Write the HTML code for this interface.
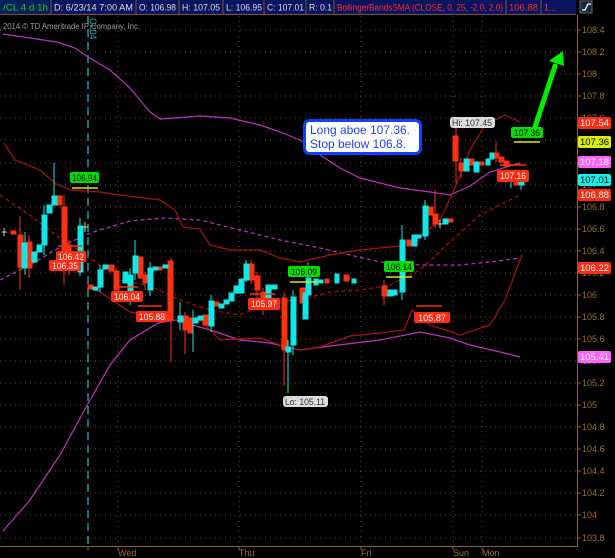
<!DOCTYPE html>
<html><head><meta charset="utf-8"><style>
html,body{margin:0;padding:0;background:#000;width:615px;height:558px;overflow:hidden;font-family:"Liberation Sans",sans-serif}
</style></head><body>
<svg width="615" height="558" viewBox="0 0 615 558" xmlns="http://www.w3.org/2000/svg" font-family="Liberation Sans, sans-serif">
<rect width="615" height="558" fill="#000"/>
<!-- top bar -->
<rect x="0" y="0" width="576" height="14" fill="#0b1460"/>
<rect x="0" y="0" width="50" height="14" fill="#06205a"/>
<g stroke="#7a5a20" stroke-width="1">
<line x1="51" y1="0" x2="51" y2="14"/><line x1="136" y1="0" x2="136" y2="14"/><line x1="179" y1="0" x2="179" y2="14"/><line x1="223" y1="0" x2="223" y2="14"/><line x1="264" y1="0" x2="264" y2="14"/><line x1="306" y1="0" x2="306" y2="14"/><line x1="334" y1="0" x2="334" y2="14"/><line x1="506" y1="0" x2="506" y2="14"/><line x1="541" y1="0" x2="541" y2="14"/>
<line x1="0" y1="14.5" x2="576" y2="14.5"/>
</g>
<g font-size="9.5" fill="#dcdcdc" lengthAdjust="spacingAndGlyphs">
<text x="3" y="10.5" fill="#22cc22" textLength="45" lengthAdjust="spacingAndGlyphs">/CL 4 d 1h</text>
<text x="54" y="10.5" textLength="79" lengthAdjust="spacingAndGlyphs">D: 6/23/14 7:00 AM</text>
<text x="139" y="10.5" textLength="37" lengthAdjust="spacingAndGlyphs">O: 106.98</text>
<text x="182" y="10.5" textLength="38" lengthAdjust="spacingAndGlyphs">H: 107.05</text>
<text x="226" y="10.5" textLength="36" lengthAdjust="spacingAndGlyphs">L: 106.95</text>
<text x="267" y="10.5" textLength="37" lengthAdjust="spacingAndGlyphs">C: 107.01</text>
<text x="309" y="10.5" textLength="23" lengthAdjust="spacingAndGlyphs">R: 0.1</text>
<text x="337" y="10.5" fill="#ff2a2a" textLength="166" lengthAdjust="spacingAndGlyphs">BollingerBandsSMA (CLOSE, 0, 25, -2.0, 2.0)</text>
<text x="509" y="10.5" fill="#ff2a2a" textLength="29" lengthAdjust="spacingAndGlyphs">106.88</text>
<text x="544" y="10.5" fill="#ff2a2a" textLength="12" lengthAdjust="spacingAndGlyphs">1...</text>
</g>
<rect x="580" y="1" width="12" height="12" fill="#1a2a3a" stroke="#667" stroke-width="1"/>
<path d="M582 10 h3 l3 -6 h3" stroke="#fff" fill="none" stroke-width="1.3"/>
<text x="3" y="29" font-size="8.5" fill="#9a9a9a" textLength="137" lengthAdjust="spacingAndGlyphs">2014 © TD Ameritrade IP Company, Inc.</text>
<!-- grid -->
<g stroke="#6a4a18" stroke-width="1" stroke-dasharray="1,4">
<line x1="0" y1="30" x2="576" y2="30"/><line x1="0" y1="52" x2="576" y2="52"/><line x1="0" y1="74" x2="576" y2="74"/><line x1="0" y1="96" x2="576" y2="96"/><line x1="0" y1="118" x2="576" y2="118"/><line x1="0" y1="140" x2="576" y2="140"/><line x1="0" y1="163" x2="576" y2="163"/><line x1="0" y1="185" x2="576" y2="185"/><line x1="0" y1="207" x2="576" y2="207"/><line x1="0" y1="229" x2="576" y2="229"/><line x1="0" y1="251" x2="576" y2="251"/><line x1="0" y1="273" x2="576" y2="273"/><line x1="0" y1="295" x2="576" y2="295"/><line x1="0" y1="317" x2="576" y2="317"/><line x1="0" y1="339" x2="576" y2="339"/><line x1="0" y1="361" x2="576" y2="361"/><line x1="0" y1="383" x2="576" y2="383"/><line x1="0" y1="405" x2="576" y2="405"/><line x1="0" y1="427" x2="576" y2="427"/><line x1="0" y1="449" x2="576" y2="449"/><line x1="0" y1="471" x2="576" y2="471"/><line x1="0" y1="493" x2="576" y2="493"/><line x1="0" y1="515" x2="576" y2="515"/><line x1="0" y1="538" x2="576" y2="538"/>
<line x1="118" y1="16" x2="118" y2="545"/><line x1="239" y1="16" x2="239" y2="545"/><line x1="361" y1="16" x2="361" y2="545"/><line x1="453" y1="16" x2="453" y2="545"/><line x1="482" y1="16" x2="482" y2="545"/>
</g>
<!-- axes -->
<g stroke="#8a6420" stroke-width="1">
<line x1="577.5" y1="15" x2="577.5" y2="546"/><line x1="0" y1="546.5" x2="578" y2="546.5"/>
<line x1="118" y1="546" x2="118" y2="550"/><line x1="239" y1="546" x2="239" y2="550"/><line x1="361" y1="546" x2="361" y2="550"/><line x1="453" y1="546" x2="453" y2="550"/><line x1="482" y1="546" x2="482" y2="550"/><line x1="88" y1="546" x2="88" y2="550"/>
<line x1="577" y1="30" x2="581" y2="30"/><line x1="577" y1="52" x2="581" y2="52"/><line x1="577" y1="74" x2="581" y2="74"/><line x1="577" y1="96" x2="581" y2="96"/><line x1="577" y1="207" x2="581" y2="207"/><line x1="577" y1="229" x2="581" y2="229"/><line x1="577" y1="251" x2="581" y2="251"/><line x1="577" y1="295" x2="581" y2="295"/><line x1="577" y1="317" x2="581" y2="317"/><line x1="577" y1="339" x2="581" y2="339"/><line x1="577" y1="383" x2="581" y2="383"/><line x1="577" y1="405" x2="581" y2="405"/><line x1="577" y1="427" x2="581" y2="427"/><line x1="577" y1="449" x2="581" y2="449"/><line x1="577" y1="471" x2="581" y2="471"/><line x1="577" y1="493" x2="581" y2="493"/><line x1="577" y1="515" x2="581" y2="515"/><line x1="577" y1="538" x2="581" y2="538"/>
</g>
<g font-size="9" fill="#9a7030">
<text x="582" y="33">108.4</text><text x="582" y="55">108.2</text><text x="582" y="77">108</text><text x="582" y="99">107.8</text><text x="582" y="121">107.6</text><text x="582" y="143">107.4</text><text x="582" y="166">107.2</text><text x="582" y="188">107</text><text x="582" y="210">106.8</text><text x="582" y="232">106.6</text><text x="582" y="254">106.4</text><text x="582" y="276">106.2</text><text x="582" y="298">106</text><text x="582" y="320">105.8</text><text x="582" y="342">105.6</text><text x="582" y="364">105.4</text><text x="582" y="386">105.2</text><text x="582" y="408">105</text><text x="582" y="430">104.8</text><text x="582" y="452">104.6</text><text x="582" y="474">104.4</text><text x="582" y="496">104.2</text><text x="582" y="518">104</text><text x="582" y="541">103.8</text>
<text x="118" y="556">Wed</text><text x="239" y="556">Thu</text><text x="361" y="556">Fri</text><text x="453" y="556">Sun</text><text x="482" y="556">Mon</text>
</g>
<!-- teal dashed -->
<line x1="88" y1="16" x2="88" y2="546" stroke="#1aa0a0" stroke-width="1.5" stroke-dasharray="8,5"/>
<text x="0" y="0" font-size="9" fill="#1ab0b0" transform="translate(90,18) rotate(90)">CL04</text>
<!-- indicator lines -->
<g fill="none" stroke-width="1.2">
<path stroke="#c030c0" d="M3 34 L30 38 L57 42 L75 48 L88 57 L110 70 L130 88 L150 112 L160 119 L175 118 L200 116 L230 118 L260 125 L280 132 L300 140 L320 155 L340 168 L360 178 L400 188 L430 192 L450 195 L470 186 L490 172 L520 163"/>
<path stroke="#c030c0" d="M3 531 L30 500 L60 455 L90 400 L110 365 L130 340 L158 323 L175 320 L210 330 L240 340 L270 343 L300 350 L330 346 L380 340 L420 332 L450 338 L470 345 L500 352 L520 357"/>
<path stroke="#c030c0" stroke-dasharray="4,3" d="M0 280 L30 265 L60 247 L90 233 L130 221 L165 218 L200 220 L240 230 L280 240 L320 248 L350 255 L380 262 L420 265 L460 265 L490 262 L520 258"/>
<path stroke="#b01010" d="M4 143 L15 160 L40 170 L55 183 L70 190 L100 192 L120 195 L160 200 L175 210 L183 227 L200 229 L210 245 L230 250 L260 250 L280 258 L300 262 L330 255 L360 250 L380 248 L400 246 L420 236 L440 220 L455 188 L470 150 L485 125 L505 115 L520 122"/>
<path stroke="#b01010" d="M90 288 L100 292 L130 312 L160 318 L180 321 L200 320 L220 340 L260 338 L280 345 L300 350 L320 347 L350 336 L380 333 L404 330 L412 310 L430 325 L460 335 L490 325 L505 300 L522 255"/>
<path stroke="#b01010" stroke-dasharray="4,3" d="M0 195 L30 215 L60 238 L90 258 L120 280 L150 286 L180 300 L210 310 L240 315 L270 302 L300 300 L330 292 L360 290 L390 285 L420 270 L450 242 L480 215 L520 195"/>
</g>
<!-- candles -->
<g stroke-width="1">
<g stroke="#ff3010" fill="#ff3010">
<line x1="20" y1="216" x2="20" y2="290"/><rect x="18" y="235" width="5" height="32"/>
<rect x="11" y="231" width="5" height="3"/>
<line x1="29" y1="235" x2="29" y2="278"/><rect x="27" y="242" width="5" height="26"/>
<rect x="57" y="196" width="5" height="9"/>
<line x1="64" y1="195" x2="64" y2="285"/><rect x="62" y="207" width="5" height="55"/>
<line x1="69" y1="240" x2="69" y2="275"/><rect x="67" y="245" width="4" height="10"/>
<rect x="88" y="285" width="5" height="4"/>
<rect x="109" y="265" width="5" height="6"/>
<line x1="116" y1="268" x2="116" y2="298"/><rect x="114" y="271" width="5" height="19"/>
<rect x="138" y="257" width="5" height="21"/>
<line x1="145" y1="272" x2="145" y2="290"/><rect x="143" y="275" width="5" height="8"/>
<rect x="158" y="267" width="4" height="3"/>
<line x1="171" y1="258" x2="171" y2="362"/><rect x="168" y="261" width="5" height="59"/>
<line x1="185" y1="312" x2="185" y2="354"/><rect x="183" y="316" width="5" height="14"/>
<rect x="188" y="318" width="5" height="15"/>
<rect x="203" y="315" width="5" height="10"/>
<rect x="214" y="302" width="5" height="4"/>
<line x1="251" y1="260" x2="251" y2="284"/><rect x="249" y="264" width="5" height="16"/>
<line x1="257" y1="272" x2="257" y2="300"/><rect x="255" y="276" width="5" height="14"/>
<line x1="263" y1="288" x2="263" y2="315"/><rect x="261" y="292" width="5" height="6"/>
<line x1="284" y1="292" x2="284" y2="386"/><rect x="282" y="298" width="5" height="52"/>
<rect x="300" y="288" width="5" height="15"/>
<rect x="325" y="279" width="4" height="4"/>
<rect x="344" y="275" width="5" height="6"/>
<line x1="384" y1="280" x2="384" y2="305"/><rect x="382" y="286" width="5" height="10"/>
<rect x="407" y="240" width="5" height="6"/>
<rect x="428" y="207" width="5" height="8"/>
<line x1="435" y1="190" x2="435" y2="228"/><rect x="433" y="214" width="5" height="10"/>
<rect x="448" y="219" width="5" height="3"/>
<line x1="456" y1="128" x2="456" y2="183"/><rect x="453" y="136" width="5" height="25"/>
<line x1="461" y1="158" x2="461" y2="178"/><rect x="459" y="163" width="5" height="8"/>
<rect x="469" y="159" width="5" height="6"/>
<rect x="479" y="162" width="5" height="3"/>
<line x1="496" y1="142" x2="496" y2="162"/><rect x="494" y="153" width="5" height="5"/>
<rect x="499" y="157" width="5" height="5"/>
<rect x="504" y="161" width="5" height="5"/>
<rect x="514" y="178" width="5" height="7"/>
</g>
<g stroke="#10e8e8" fill="#10e8e8">
<line x1="25" y1="232" x2="25" y2="275"/><rect x="22" y="243" width="5" height="25"/>
<rect x="32" y="252" width="5" height="10"/>
<rect x="37" y="245" width="5" height="7"/>
<line x1="44" y1="205" x2="44" y2="255"/><rect x="42" y="215" width="5" height="30"/>
<rect x="47" y="205" width="5" height="8"/>
<line x1="54" y1="163" x2="54" y2="205"/><rect x="52" y="196" width="5" height="9"/>
<line x1="80" y1="218" x2="80" y2="276"/><rect x="78" y="226" width="5" height="46"/>
<rect x="93" y="287" width="5" height="3"/>
<line x1="100" y1="265" x2="100" y2="292"/><rect x="98" y="270" width="5" height="17"/>
<rect x="103" y="265" width="5" height="4"/>
<rect x="123" y="272" width="5" height="11"/>
<line x1="130" y1="268" x2="130" y2="305"/><rect x="128" y="275" width="5" height="25"/>
<line x1="135" y1="240" x2="135" y2="280"/><rect x="133" y="256" width="5" height="17"/>
<line x1="150" y1="262" x2="150" y2="296"/><rect x="148" y="268" width="5" height="22"/>
<rect x="153" y="267" width="5" height="3"/>
<rect x="163" y="265" width="5" height="3"/>
<line x1="180" y1="302" x2="180" y2="330"/><rect x="178" y="316" width="5" height="6"/>
<line x1="193" y1="310" x2="193" y2="352"/><rect x="193" y="318" width="5" height="5"/>
<rect x="198" y="316" width="5" height="4"/>
<line x1="211" y1="295" x2="211" y2="332"/><rect x="209" y="301" width="5" height="25"/>
<rect x="219" y="304" width="5" height="4"/><rect x="224" y="300" width="5" height="4"/>
<rect x="229" y="293" width="5" height="8"/><rect x="234" y="286" width="5" height="7"/>
<rect x="239" y="279" width="5" height="14"/>
<line x1="246" y1="260" x2="246" y2="282"/><rect x="244" y="264" width="5" height="16"/>
<rect x="266" y="285" width="5" height="13"/>
<rect x="272" y="285" width="5" height="4"/>
<line x1="288" y1="340" x2="288" y2="393"/><rect x="286" y="347" width="5" height="5"/>
<line x1="293" y1="290" x2="293" y2="355"/><rect x="291" y="297" width="5" height="48"/>
<rect x="303" y="293" width="5" height="26"/>
<line x1="308" y1="262" x2="308" y2="300"/><rect x="306" y="278" width="5" height="17"/>
<rect x="314" y="279" width="4" height="6"/>
<rect x="319" y="280" width="4" height="3"/>
<rect x="335" y="274" width="4" height="9"/>
<rect x="352" y="279" width="4" height="4"/>
<rect x="388" y="290" width="5" height="6"/>
<rect x="393" y="290" width="4" height="5"/>
<line x1="402" y1="225" x2="402" y2="300"/><rect x="400" y="240" width="5" height="52"/>
<rect x="412" y="235" width="5" height="11"/>
<rect x="417" y="235" width="4" height="3"/>
<line x1="425" y1="200" x2="425" y2="240"/><rect x="423" y="206" width="5" height="30"/>
<rect x="443" y="219" width="5" height="5"/>
<rect x="464" y="159" width="5" height="12"/>
<rect x="474" y="162" width="5" height="10"/>
<rect x="486" y="159" width="4" height="6"/>
<rect x="490" y="153" width="4" height="6"/>
<line x1="511" y1="170" x2="511" y2="188"/><rect x="509" y="174" width="5" height="6"/>
<line x1="521" y1="175" x2="521" y2="190"/><rect x="519" y="179" width="5" height="6"/>
</g>
<g stroke="#ccc"><line x1="4" y1="228" x2="4" y2="236"/><line x1="2" y1="232" x2="7" y2="232"/><line x1="85" y1="222" x2="85" y2="232"/><line x1="83" y1="227" x2="88" y2="227"/><line x1="440" y1="220" x2="440" y2="228"/><line x1="438" y1="224" x2="443" y2="224"/></g>
</g>
<!-- level lines -->
<g stroke-width="1.5">
<line x1="72" y1="188" x2="98" y2="188" stroke="#d8e800"/>
<line x1="290" y1="282" x2="318" y2="282" stroke="#d8e800"/>
<line x1="386" y1="277" x2="412" y2="277" stroke="#d8e800"/>
<line x1="514" y1="142" x2="540" y2="142" stroke="#d8e800"/>
<line x1="58" y1="246" x2="82" y2="246" stroke="#ff3010"/>
<line x1="116" y1="287" x2="138" y2="287" stroke="#ff3010"/>
<line x1="138" y1="306" x2="162" y2="306" stroke="#ff3010"/>
<line x1="250" y1="294" x2="275" y2="294" stroke="#ff3010"/>
<line x1="416" y1="306" x2="442" y2="306" stroke="#ff3010"/>
<line x1="500" y1="165" x2="526" y2="165" stroke="#ff3010"/>
</g>
<!-- bubbles -->
<g font-size="9.5">
<rect x="70" y="172" width="29" height="11" rx="2" fill="#00e000"/><text x="72" y="181" fill="#000" textLength="25" lengthAdjust="spacingAndGlyphs">106.94</text>
<rect x="288" y="266" width="32" height="11" rx="2" fill="#00e000"/><text x="291" y="275" fill="#000" textLength="26" lengthAdjust="spacingAndGlyphs">106.09</text>
<rect x="384" y="261" width="30" height="11" rx="2" fill="#00e000"/><text x="386" y="270" fill="#000" textLength="26" lengthAdjust="spacingAndGlyphs">106.14</text>
<rect x="511" y="127" width="32" height="11" rx="2" fill="#00e000"/><text x="514" y="136" fill="#000" textLength="26" lengthAdjust="spacingAndGlyphs">107.36</text>
<g fill="#ff2a10"><rect x="56" y="251" width="30" height="11" rx="2"/><rect x="49" y="260" width="32" height="11" rx="2"/><rect x="111" y="291" width="32" height="11" rx="2"/><rect x="136" y="311" width="32" height="11" rx="2"/><rect x="248" y="298" width="32" height="12" rx="2"/><rect x="414" y="312" width="36" height="11" rx="2"/><rect x="497" y="170" width="32" height="12" rx="2"/></g>
<g fill="#fff"><text x="58" y="260" textLength="26" lengthAdjust="spacingAndGlyphs">106.42</text><text x="52" y="269" textLength="26" lengthAdjust="spacingAndGlyphs">106.35</text><text x="114" y="300" textLength="26" lengthAdjust="spacingAndGlyphs">106.04</text><text x="139" y="320" textLength="26" lengthAdjust="spacingAndGlyphs">105.88</text><text x="251" y="307" textLength="26" lengthAdjust="spacingAndGlyphs">105.97</text><text x="418" y="321" textLength="28" lengthAdjust="spacingAndGlyphs">105.87</text><text x="500" y="179" textLength="26" lengthAdjust="spacingAndGlyphs">107.16</text></g>
<rect x="450" y="117" width="45" height="11" rx="3" fill="#dcdcdc"/><text x="452" y="126" fill="#333" textLength="40" lengthAdjust="spacingAndGlyphs">Hi: 107.45</text>
<rect x="283" y="396" width="45" height="11" rx="3" fill="#dcdcdc"/><text x="285" y="405" fill="#333" textLength="40" lengthAdjust="spacingAndGlyphs">Lo: 105.11</text>
</g>
<!-- axis tags -->
<g font-size="9.5">
<rect x="578" y="117" width="33" height="12" rx="2" fill="#ff2a10"/><text x="580" y="126" fill="#fff" textLength="29" lengthAdjust="spacingAndGlyphs">107.54</text>
<rect x="578" y="136" width="33" height="12" rx="2" fill="#d8f000"/><text x="580" y="145" fill="#000" textLength="29" lengthAdjust="spacingAndGlyphs">107.36</text>
<rect x="578" y="156" width="33" height="12" rx="2" fill="#ff60ff"/><text x="580" y="165" fill="#fff" textLength="29" lengthAdjust="spacingAndGlyphs">107.18</text>
<rect x="578" y="174" width="33" height="12" rx="2" fill="#10f0f0"/><text x="580" y="183" fill="#000" textLength="29" lengthAdjust="spacingAndGlyphs">107.01</text>
<rect x="578" y="189" width="33" height="12" rx="2" fill="#ff2a10"/><text x="580" y="198" fill="#fff" textLength="29" lengthAdjust="spacingAndGlyphs">106.88</text>
<rect x="578" y="262" width="33" height="12" rx="2" fill="#ff2a10"/><text x="580" y="271" fill="#fff" textLength="29" lengthAdjust="spacingAndGlyphs">106.22</text>
<rect x="578" y="351" width="33" height="12" rx="2" fill="#ff60ff"/><text x="580" y="360" fill="#fff" textLength="29" lengthAdjust="spacingAndGlyphs">105.41</text>
</g>
<!-- note -->
<rect x="304.5" y="120.5" width="116" height="33" rx="5" fill="#fff" stroke="#1040ff" stroke-width="3"/>
<text x="310" y="134" font-size="12" fill="#2040ff" textLength="100" lengthAdjust="spacingAndGlyphs">Long aboe 107.36.</text>
<text x="310" y="148" font-size="12" fill="#2040ff" textLength="96" lengthAdjust="spacingAndGlyphs">Stop below 106.8.</text>
<!-- arrow -->
<line x1="535" y1="127" x2="555" y2="66" stroke="#00ee00" stroke-width="5" stroke-linecap="round"/>
<polygon points="563,51 549,61 564,66" fill="#00ee00"/>
</svg>
</body></html>
